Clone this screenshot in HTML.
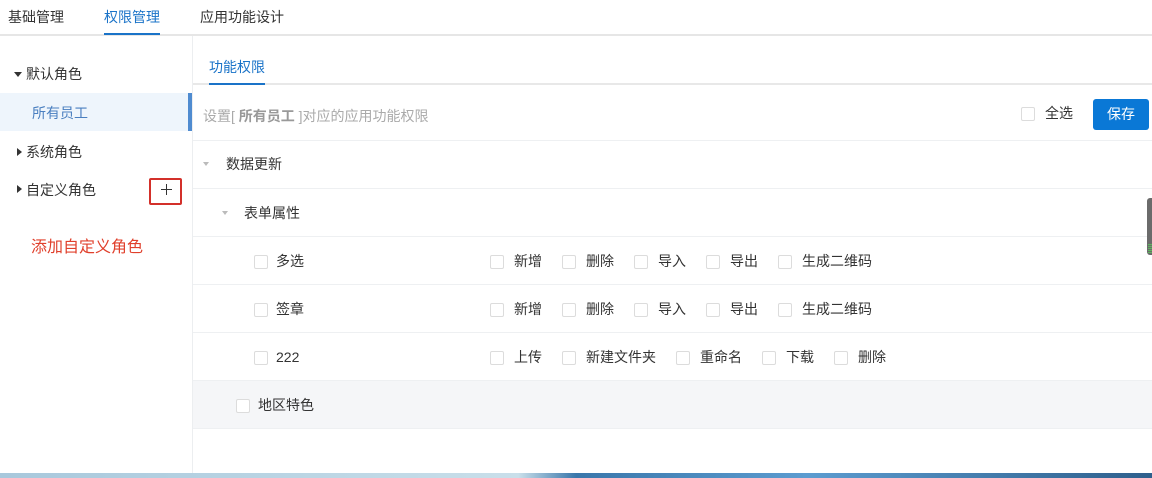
<!DOCTYPE html>
<html><head><meta charset="utf-8"><style>
*{margin:0;padding:0;box-sizing:border-box}
body{width:1152px;height:478px;overflow:hidden;background:#fff;font-family:"Liberation Sans","Noto Sans CJK SC",sans-serif;font-size:14px;line-height:20px;color:#333;position:relative}
.a{position:absolute;white-space:nowrap}
.cb{position:absolute;width:14px;height:14px;border:1px solid #dcdcdc;border-radius:2px;background:#fff}
.row{position:absolute;left:193px;right:0;border-bottom:1px solid #eef0f2}
.tri{position:absolute;width:0;height:0}
</style></head><body>
<div class="a" style="left:8px;top:7px">基础管理</div>
<div class="a" style="left:104px;top:7px;color:#1a73c8">权限管理</div>
<div class="a" style="left:200px;top:7px">应用功能设计</div>
<div class="a" style="left:0;top:34px;width:1152px;height:2px;background:#e6e6e6"></div>
<div class="a" style="left:104px;top:33px;width:56px;height:2px;background:#1a73c8"></div>
<div class="a" style="left:192px;top:36px;width:1px;height:437px;background:#eceef0"></div>
<div class="tri" style="left:14px;top:72px;border-left:4px solid transparent;border-right:4px solid transparent;border-top:5px solid #333"></div>
<div class="a" style="left:26px;top:64px">默认角色</div>
<div class="a" style="left:0;top:93px;width:188px;height:38px;background:#eef5fc"></div>
<div class="a" style="left:188px;top:93px;width:4px;height:38px;background:#4f8bd0"></div>
<div class="a" style="left:32px;top:103px;color:#4a7fc0">所有员工</div>
<div class="tri" style="left:17px;top:148px;border-top:4px solid transparent;border-bottom:4px solid transparent;border-left:5px solid #333"></div>
<div class="a" style="left:26px;top:142px">系统角色</div>
<div class="tri" style="left:17px;top:185px;border-top:4px solid transparent;border-bottom:4px solid transparent;border-left:5px solid #333"></div>
<div class="a" style="left:26px;top:180px">自定义角色</div>
<div class="a" style="left:149px;top:178px;width:33px;height:27px;border:2px solid #d3302a;border-radius:2px"></div>
<div class="a" style="left:161px;top:189px;width:11px;height:1px;background:#333"></div>
<div class="a" style="left:166px;top:184px;width:1px;height:11px;background:#333"></div>
<div class="a" style="left:31px;top:237px;font-size:16px;line-height:22px;color:#e0402c">添加自定义角色</div>
<div class="a" style="left:209px;top:57px;color:#1a73c8">功能权限</div>
<div class="a" style="left:193px;top:83px;width:959px;height:2px;background:#e8e8e8"></div>
<div class="a" style="left:209px;top:83px;width:56px;height:2px;background:#1a73c8"></div>
<div class="a" style="left:203px;top:106px;color:#aaa">设置[ <b style="color:#999">所有员工</b> ]对应的应用功能权限</div>
<div class="cb" style="left:1021px;top:107px"></div>
<div class="a" style="left:1045px;top:103px">全选</div>
<div class="a" style="left:1093px;top:99px;width:56px;height:31px;background:#0a78d6;border-radius:3px;color:#fff;text-align:center;line-height:31px">保存</div>
<div class="row" style="top:85px;height:56px"></div>
<div class="row" style="top:141px;height:48px"></div>
<div class="tri" style="left:203px;top:162px;border-left:3px solid transparent;border-right:3px solid transparent;border-top:4px solid #bbb"></div>
<div class="a" style="left:226px;top:154px">数据更新</div>
<div class="row" style="top:189px;height:48px"></div>
<div class="tri" style="left:222px;top:211px;border-left:3px solid transparent;border-right:3px solid transparent;border-top:4px solid #bbb"></div>
<div class="a" style="left:244px;top:203px">表单属性</div>
<div class="row" style="top:237px;height:48px"></div>
<div class="cb" style="left:254px;top:255px"></div><div class="a" style="left:276px;top:251px">多选</div>
<div class="cb" style="left:490px;top:255px"></div><div class="a" style="left:514px;top:251px">新增</div>
<div class="cb" style="left:562px;top:255px"></div><div class="a" style="left:586px;top:251px">删除</div>
<div class="cb" style="left:634px;top:255px"></div><div class="a" style="left:658px;top:251px">导入</div>
<div class="cb" style="left:706px;top:255px"></div><div class="a" style="left:730px;top:251px">导出</div>
<div class="cb" style="left:778px;top:255px"></div><div class="a" style="left:802px;top:251px">生成二维码</div>
<div class="row" style="top:285px;height:48px"></div>
<div class="cb" style="left:254px;top:303px"></div><div class="a" style="left:276px;top:299px">签章</div>
<div class="cb" style="left:490px;top:303px"></div><div class="a" style="left:514px;top:299px">新增</div>
<div class="cb" style="left:562px;top:303px"></div><div class="a" style="left:586px;top:299px">删除</div>
<div class="cb" style="left:634px;top:303px"></div><div class="a" style="left:658px;top:299px">导入</div>
<div class="cb" style="left:706px;top:303px"></div><div class="a" style="left:730px;top:299px">导出</div>
<div class="cb" style="left:778px;top:303px"></div><div class="a" style="left:802px;top:299px">生成二维码</div>
<div class="row" style="top:333px;height:48px"></div>
<div class="cb" style="left:254px;top:351px"></div><div class="a" style="left:276px;top:347px">222</div>
<div class="cb" style="left:490px;top:351px"></div><div class="a" style="left:514px;top:347px">上传</div>
<div class="cb" style="left:562px;top:351px"></div><div class="a" style="left:586px;top:347px">新建文件夹</div>
<div class="cb" style="left:676px;top:351px"></div><div class="a" style="left:700px;top:347px">重命名</div>
<div class="cb" style="left:762px;top:351px"></div><div class="a" style="left:786px;top:347px">下载</div>
<div class="cb" style="left:834px;top:351px"></div><div class="a" style="left:858px;top:347px">删除</div>
<div class="row" style="top:381px;height:48px;background:#f5f6f8"></div>
<div class="cb" style="left:236px;top:399px"></div><div class="a" style="left:258px;top:395px">地区特色</div>
<div class="a" style="left:1147px;top:198px;width:8px;height:57px;background:#6b6b6b;border-radius:3px 0 0 3px"></div>
<div class="a" style="left:1148px;top:244px;width:4px;height:9px;background:repeating-linear-gradient(#5cb85c 0 1px,transparent 1px 2px)"></div>
<div class="a" style="left:0;top:473px;width:1152px;height:5px;background:linear-gradient(90deg,#a8c8dc 0,#c9dfea 45%,#3a77ab 50%,#5c9cd0 70%,#2e5f8c 100%)"></div>
</body></html>
